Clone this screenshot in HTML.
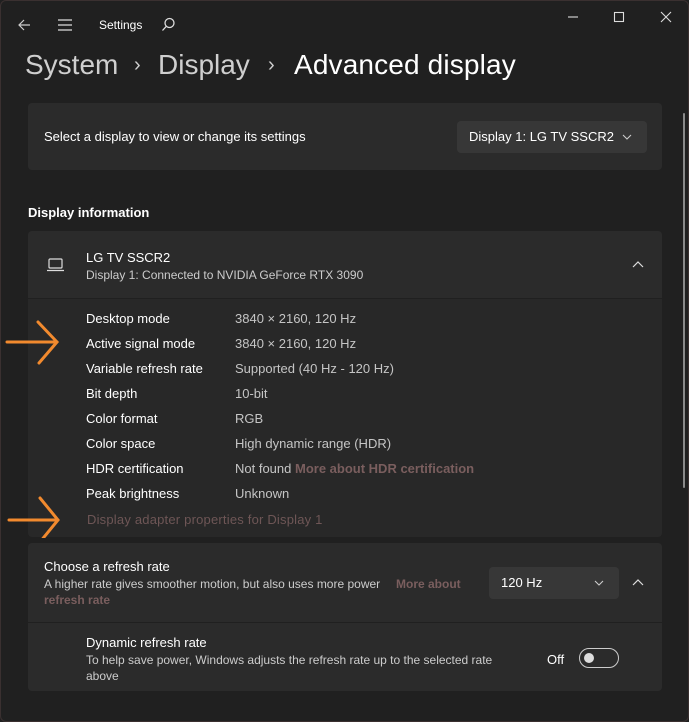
<!DOCTYPE html>
<html><head><meta charset="utf-8"><style>
*{margin:0;padding:0;box-sizing:border-box}
body{width:689px;height:722px;background:#202020;font-family:"Liberation Sans",sans-serif;color:#fff;position:relative;overflow:hidden}
.a{position:absolute;white-space:nowrap}
.card{position:absolute;left:28px;width:634px;background:#2b2b2b;border-radius:4px}
.l{font-size:13px;color:#fff}
.v{font-size:13px;color:#c5c5c5}
.dd{position:absolute;background:#373737;border-radius:4px;font-size:13px}
.s{font-size:12px;color:#ccc}
</style></head><body>
<div class="a" style="left:0;top:0;width:689px;height:722px;border:1px solid #3a3030;border-radius:6px"></div>
<svg class="a" style="left:17px;top:18px" width="14" height="14" viewBox="0 0 14 14" fill="none" stroke="#ccc" stroke-width="1.2"><path d="M13 7H2M7 2L2 7l5 5"/></svg>
<svg class="a" style="left:57px;top:18px" width="16" height="14" viewBox="0 0 16 14" stroke="#ddd" stroke-width="1.2"><path d="M1 2h14M1 7h14M1 12h14"/></svg>
<div class="a" style="left:99px;top:18px;font-size:12px;color:#fff">Settings</div>
<svg class="a" style="left:161px;top:17px" width="15" height="15" viewBox="0 0 15 15" fill="none" stroke="#ddd" stroke-width="1.3"><circle cx="8.5" cy="6" r="4.5"/><path d="M5.3 9.3L1.5 13.5"/></svg>
<svg class="a" style="left:566px;top:10px" width="110" height="16" stroke="#ddd" stroke-width="1.1" fill="none"><path d="M2 7h10"/><rect x="48.5" y="2.5" width="9" height="9"/><path d="M95 2l10 10M105 2L95 12"/></svg>
<div class="a" style="left:25px;top:49px;font-size:28px;color:#cfcfcf">System</div>
<div class="a" style="left:134px;top:54px;font-size:20px;color:#cfcfcf">›</div>
<div class="a" style="left:158px;top:49px;font-size:28px;color:#cfcfcf">Display</div>
<div class="a" style="left:268px;top:54px;font-size:20px;color:#cfcfcf">›</div>
<div class="a" style="left:294px;top:49px;font-size:28px;color:#fff;letter-spacing:0.15px">Advanced display</div>
<div class="a" style="left:683px;top:113px;width:2px;height:375px;background:#8a8a8a;border-radius:1px"></div>

<div class="card" style="top:103px;height:67px"></div>
<div class="a l" style="left:44px;top:129px">Select a display to view or change its settings</div>
<div class="dd" style="left:457px;top:121px;width:190px;height:32px"><span class="a" style="left:12px;top:8px">Display 1: LG TV SSCR2</span><svg class="a" style="left:165px;top:13px" width="10" height="6" fill="none" stroke="#ccc" stroke-width="1.1"><path d="M1 1l4 4 4-4"/></svg></div>

<div class="a" style="left:28px;top:205px;font-size:13px;font-weight:bold">Display information</div>
<div class="card" style="top:231px;height:67px;border-radius:4px 4px 0 0"></div>
<svg class="a" style="left:46px;top:257px" width="20" height="16" fill="none" stroke="#ddd" stroke-width="1.2"><rect x="3" y="2" width="13" height="9" rx="1"/><path d="M1 13.5h17"/></svg>
<div class="a l" style="left:86px;top:250px">LG TV SSCR2</div>
<div class="a s" style="left:86px;top:268px">Display 1: Connected to NVIDIA GeForce RTX 3090</div>
<svg class="a" style="left:632px;top:260px" width="12" height="8" fill="none" stroke="#ddd" stroke-width="1.2"><path d="M1 7l5-5 5 5"/></svg>
<div class="card" style="top:299px;height:238px;background:#282828;border-radius:0 0 4px 4px"></div>
<div class="a l" style="left:86px;top:311px">Desktop mode</div><div class="a v" style="left:235px;top:311px">3840 × 2160, 120 Hz</div>
<div class="a l" style="left:86px;top:336px">Active signal mode</div><div class="a v" style="left:235px;top:336px">3840 × 2160, 120 Hz</div>
<div class="a l" style="left:86px;top:361px">Variable refresh rate</div><div class="a v" style="left:235px;top:361px">Supported (40 Hz - 120 Hz)</div>
<div class="a l" style="left:86px;top:386px">Bit depth</div><div class="a v" style="left:235px;top:386px">10-bit</div>
<div class="a l" style="left:86px;top:411px">Color format</div><div class="a v" style="left:235px;top:411px">RGB</div>
<div class="a l" style="left:86px;top:436px">Color space</div><div class="a v" style="left:235px;top:436px">High dynamic range (HDR)</div>
<div class="a l" style="left:86px;top:461px">HDR certification</div><div class="a v" style="left:235px;top:461px">Not found <span style="font-weight:bold;color:#7a5e5e">More about HDR certification</span></div>
<div class="a l" style="left:86px;top:486px">Peak brightness</div><div class="a v" style="left:235px;top:486px">Unknown</div>
<div class="a" style="left:87px;top:512px;font-size:13px;color:#6e5656;letter-spacing:0.2px">Display adapter properties for Display 1</div>
<svg class="a" style="left:0;top:318px" width="85" height="220" fill="none" stroke="#f28a2e" stroke-width="3" stroke-linecap="round"><path d="M7 24h50M38 4l19 20-18 21"/><path d="M9 202h49M40 180l18 22-18 22"/></svg>

<div class="card" style="top:543px;height:79px;border-radius:4px 4px 0 0"></div>
<div class="a l" style="left:44px;top:559px">Choose a refresh rate</div>
<div class="a s" style="left:44px;top:577px">A higher rate gives smoother motion, but also uses more power</div>
<div class="a s" style="left:396px;top:577px;color:#7a5e5e;font-weight:bold">More about</div>
<div class="a s" style="left:44px;top:593px;color:#7a5e5e;font-weight:bold">refresh rate</div>
<div class="dd" style="left:489px;top:567px;width:130px;height:32px"><span class="a" style="left:12px;top:8px">120 Hz</span><svg class="a" style="left:105px;top:13px" width="10" height="6" fill="none" stroke="#ccc" stroke-width="1.1"><path d="M1 1l4 4 4-4"/></svg></div>
<svg class="a" style="left:632px;top:578px" width="12" height="8" fill="none" stroke="#ddd" stroke-width="1.2"><path d="M1 7l5-5 5 5"/></svg>
<div class="card" style="top:623px;height:68px;border-radius:0 0 4px 4px"></div>
<div class="a l" style="left:86px;top:635px">Dynamic refresh rate</div>
<div class="a s" style="left:86px;top:653px">To help save power, Windows adjusts the refresh rate up to the selected rate</div>
<div class="a s" style="left:86px;top:669px">above</div>
<div class="a l" style="left:547px;top:652px">Off</div>
<div class="a" style="left:579px;top:648px;width:40px;height:20px;border:1px solid #ccc;border-radius:10px"><div class="a" style="left:4px;top:4px;width:10px;height:10px;border-radius:5px;background:#ddd"></div></div>
</body></html>
